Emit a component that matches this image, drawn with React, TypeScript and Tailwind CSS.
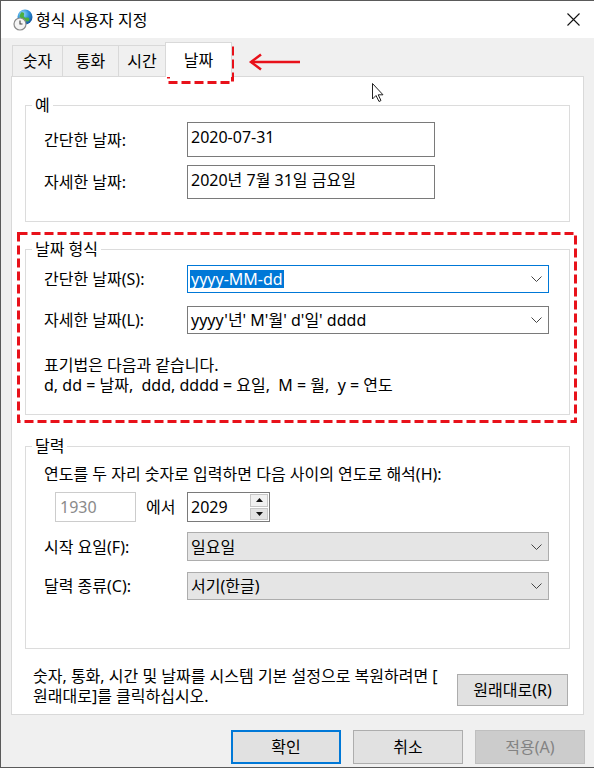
import React from 'react'

function Chevron() {
  return (
    <svg width="11" height="6" viewBox="0 0 11 6">
      <polyline points="0.5,0.5 5.5,5.5 10.5,0.5" fill="none" stroke="#444" strokeWidth="1" />
    </svg>
  )
}

function TitleIcon() {
  return (
    <svg width="20" height="22" viewBox="0 0 20 22">
      <defs>
        <radialGradient id="g" cx="35%" cy="30%" r="75%">
          <stop offset="0%" stopColor="#9fe0ff" />
          <stop offset="55%" stopColor="#2a8fd8" />
          <stop offset="100%" stopColor="#13549c" />
        </radialGradient>
      </defs>
      <circle cx="12" cy="8" r="7.5" fill="url(#g)" />
      <path d="M8 3.5 C10 2.5 12 4 11 6 C10 8 12 9 14 8.5 C16 8 17 10 16 12 C14 13 12 12 11 11 C9 10 7 9 6.5 7 Z" fill="#4caf3f" />
      <circle cx="7" cy="15" r="6" fill="#f4f4f4" stroke="#8a8a8a" strokeWidth="1.2" />
      <path d="M7 11.5 V15 H9.5" fill="none" stroke="#444" strokeWidth="1.1" />
    </svg>
  )
}

function Tab({ label, w, active }: { label: string; w: string; active?: boolean }) {
  if (active) {
    return (
      <div className={`${w} h-[35px] -mb-px relative z-10 bg-white border-t border-l border-r border-[#d9d9d9] flex items-center justify-center`}>
        {label}
      </div>
    )
  }
  return (
    <div className={`${w} h-[31px] border-t border-l border-[#d9d9d9] bg-[#f0f0f0] flex items-center justify-center`}>
      {label}
    </div>
  )
}

export default function App() {
  return (
    <div className="relative w-[594px] h-[768px] bg-[#f0f0f0] border-l border-t border-b border-[#5a5a5a] overflow-hidden text-[16px] leading-5 text-black font-['Noto_Sans','Noto_Sans_CJK_KR',sans-serif]">
      {/* Title bar */}
      <div className="h-[37px] bg-white flex items-center pl-[12px] pr-[14px]">
        <TitleIcon />
        <span className="ml-[3px]">형식 사용자 지정</span>
        <svg className="ml-auto" width="13" height="13" viewBox="0 0 13 13">
          <path d="M0.5 0.5 L12.5 12.5 M12.5 0.5 L0.5 12.5" stroke="#111" strokeWidth="1.1" />
        </svg>
      </div>

      {/* Tabs */}
      <div className="mt-[4px] ml-[11px] flex items-end">
        <Tab label="숫자" w="w-[50px]" />
        <Tab label="통화" w="w-[56px]" />
        <Tab label="시간" w="w-[47px]" />
        <Tab label="날짜" w="w-[67px]" active />
      </div>

      {/* Panel */}
      <div className="ml-[10px] w-[573px] h-[639px] bg-white border border-[#d9d9d9] px-[13px] pt-[18px]">
        {/* 예 */}
        <fieldset className="border border-[#dcdcdc] p-0 m-0">
          <legend className="ml-[6px] px-[3px] leading-5">예</legend>
          <div className="px-[18px] pt-[7px] pb-[22px]">
            <div className="flex items-center">
              <span className="w-[143px]">간단한 날짜:</span>
              <div className="w-[248px] h-[35px] border border-[#7a7a7a] px-[3px] pt-[4px]">2020-07-31</div>
            </div>
            <div className="flex items-center mt-[8px]">
              <span className="w-[143px]">자세한 날짜:</span>
              <div className="w-[248px] h-[34px] border border-[#7a7a7a] px-[3px] pt-[4px]">2020년 7월 31일 금요일</div>
            </div>
          </div>
        </fieldset>

        {/* 날짜 형식 */}
        <fieldset className="mt-[17px] border border-[#dcdcdc] p-0">
          <legend className="ml-[6px] px-[3px] leading-5">날짜 형식</legend>
          <div className="px-[18px] pt-[6px] pb-[19px]">
            <div className="flex items-center">
              <span className="w-[143px]">간단한 날짜(S):</span>
              <div className="w-[362px] h-[28px] border border-[#0078d7] flex items-center justify-between pl-[2px] pr-[6px]">
                <span className="bg-[#0078d7] text-white leading-[18px] px-px">yyyy-MM-dd</span>
                <Chevron />
              </div>
            </div>
            <div className="flex items-center mt-[13px]">
              <span className="w-[143px]">자세한 날짜(L):</span>
              <div className="w-[362px] h-[28px] border border-[#7a7a7a] flex items-center justify-between pl-[3px] pr-[6px]">
                <span>yyyy'년' M'월' d'일' dddd</span>
                <Chevron />
              </div>
            </div>
            <div className="mt-[21px]">
              <div>표기법은 다음과 같습니다.</div>
              <div className="whitespace-pre">d, dd = 날짜,  ddd, dddd = 요일,  M = 월,  y = 연도</div>
            </div>
          </div>
        </fieldset>

        {/* 달력 */}
        <fieldset className="mt-[21px] border border-[#dcdcdc] p-0">
          <legend className="ml-[6px] px-[3px] leading-5">달력</legend>
          <div className="px-[18px] pt-[8px] pb-[48px]">
            <div>연도를 두 자리 숫자로 입력하면 다음 사이의 연도로 해석(H):</div>
            <div className="flex items-center mt-[8px]">
              <div className="w-[143px] flex items-center">
                <div className="ml-[11px] w-[81px] h-[30px] border border-[#cccccc] text-[#8a8a8a] px-[4px] flex items-center">1930</div>
                <span className="ml-[10px]">에서</span>
              </div>
              <div className="w-[83px] h-[30px] border border-[#7a7a7a] flex">
                <span className="flex-1 px-[3px] flex items-center">2029</span>
                <div className="w-[20px] flex flex-col gap-px p-px">
                  <div className="flex-1 bg-[#f0f0f0] border border-[#c6c6c6] flex items-center justify-center">
                    <svg width="7" height="4" viewBox="0 0 7 4"><polygon points="0,4 3.5,0 7,4" fill="#111" /></svg>
                  </div>
                  <div className="flex-1 bg-[#e3e3e3] border border-[#c6c6c6] flex items-center justify-center">
                    <svg width="7" height="4" viewBox="0 0 7 4"><polygon points="0,0 3.5,4 7,0" fill="#111" /></svg>
                  </div>
                </div>
              </div>
            </div>
            <div className="flex items-center mt-[10px]">
              <span className="w-[143px]">시작 요일(F):</span>
              <div className="w-[362px] h-[29px] bg-[#e5e5e5] border border-[#adadad] flex items-center justify-between pl-[3px] pr-[6px]">
                <span>일요일</span>
                <Chevron />
              </div>
            </div>
            <div className="flex items-center mt-[11px]">
              <span className="w-[143px]">달력 종류(C):</span>
              <div className="w-[362px] h-[28px] bg-[#e5e5e5] border border-[#adadad] flex items-center justify-between pl-[3px] pr-[6px]">
                <span>서기(한글)</span>
                <Chevron />
              </div>
            </div>
          </div>
        </fieldset>

        {/* Reset */}
        <div className="flex items-start mt-[17px] pl-[8px] pr-[2px]">
          <p>
            숫자, 통화, 시간 및 날짜를 시스템 기본 설정으로 복원하려면 [<br />
            원래대로]를 클릭하십시오.
          </p>
          <button className="ml-auto mt-[8px] w-[111px] h-[32px] bg-[#e1e1e1] border border-[#adadad]">원래대로(R)</button>
        </div>
      </div>

      {/* Dialog buttons */}
      <div className="flex justify-end gap-[12px] pr-[9px] mt-[15px]">
        <button className="w-[110px] h-[34px] bg-[#e1e1e1] border-2 border-[#0078d7]">확인</button>
        <button className="w-[110px] h-[34px] bg-[#e1e1e1] border border-[#adadad]">취소</button>
        <button className="w-[110px] h-[34px] bg-[#cccccc] border border-[#bfbfbf] text-[#838383]">적용(A)</button>
      </div>

      {/* Annotations and cursor overlay */}
      <svg className="absolute left-[-1px] top-[-1px] pointer-events-none" width="594" height="772" viewBox="0 0 594 772">
        <rect x="168.5" y="45.5" width="64" height="37" fill="none" stroke="#e8111a" strokeWidth="3" strokeDasharray="9 4" />
        <rect x="18.5" y="233.5" width="557" height="188" fill="none" stroke="#e8111a" strokeWidth="3" strokeDasharray="9 4" />
        <line x1="251" y1="62" x2="300" y2="62" stroke="#e8111a" strokeWidth="2.5" />
        <polyline points="261,54.5 251,62 261,69.5" fill="none" stroke="#e8111a" strokeWidth="2.5" />
        <path d="M372.5 83.5 L372.5 99 L376 95.5 L379 101.5 L381 100.5 L378.2 94.8 L383 94.8 Z" fill="#fff" stroke="#222" strokeWidth="1" strokeLinejoin="round" />
      </svg>
    </div>
  )
}
